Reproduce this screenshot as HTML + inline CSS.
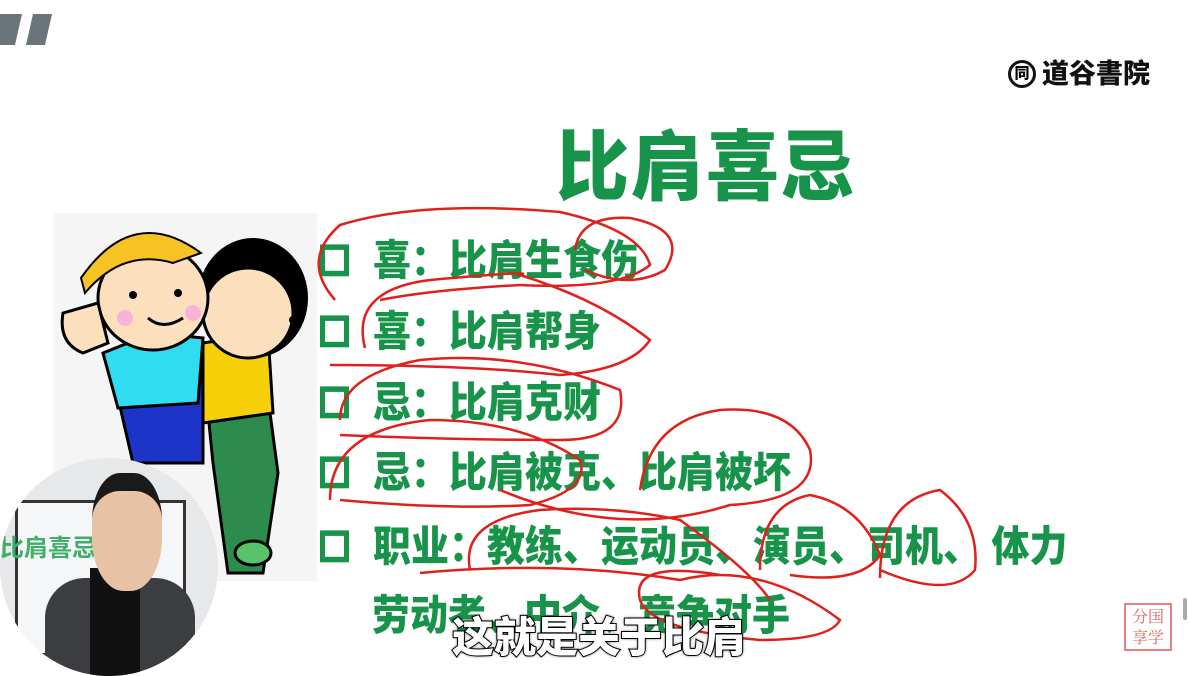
<!DOCTYPE html>
<html><head><meta charset="utf-8"><style>
html,body{margin:0;padding:0}
body{width:1189px;height:669px;position:relative;overflow:hidden;background:#fff;font-family:"Liberation Sans","Noto Sans CJK SC",sans-serif}
.t{position:absolute;color:#17934a;font-weight:900;white-space:nowrap}
.row{position:absolute;left:320px;font-size:38px;font-weight:900;color:#17934a;white-space:nowrap;line-height:40px;transform:scaleY(1.1);transform-origin:left center}
.box{display:inline-block;width:19px;height:19px;border:5px solid #17934a;vertical-align:middle;margin-right:24px;margin-top:-6px}
</style></head><body>
<svg style="position:absolute;left:0;top:0" width="60" height="50"><polygon points="0,14 22,14 15,45 0,45" fill="#6b7479"/><polygon points="33,14 52,14 45,45 26,45" fill="#6b7479"/></svg>
<div style="position:absolute;left:1008px;top:60px;width:28px;height:28px;border:3px solid #111;border-radius:50%;box-sizing:border-box;font-size:15px;font-weight:900;text-align:center;line-height:22px">同</div>
<div class="t" style="left:1042px;top:56px;font-size:27px;color:#111;line-height:36px">道谷書院</div>
<div class="t" style="left:556px;top:126px;font-size:73px;line-height:86px;letter-spacing:2px;transform:scaleY(1.05)">比肩喜忌</div>
<svg style="position:absolute;left:53px;top:213px" width="264" height="368">
<rect width="264" height="368" fill="#f5f5f5"/>
<path d="M150 150 L205 110 L225 260 L210 360 L175 360 L160 250 Z" fill="#2e8b4e" stroke="#000" stroke-width="3"/>
<path d="M150 130 L215 120 L220 200 L150 210 Z" fill="#f6d10a" stroke="#000" stroke-width="3"/>
<ellipse cx="200" cy="85" rx="55" ry="60" fill="#000"/>
<ellipse cx="195" cy="100" rx="45" ry="45" fill="#fce0bd" stroke="#000" stroke-width="3"/>
<path d="M65 185 L150 130 L150 250 L80 250 Z" fill="#1c35c8" stroke="#000" stroke-width="3"/>
<path d="M50 140 L100 120 L150 125 L145 190 L65 195 Z" fill="#2fdcf0" stroke="#000" stroke-width="3"/>
<ellipse cx="100" cy="85" rx="55" ry="52" fill="#fce0bd" stroke="#000" stroke-width="3"/>
<path d="M28 65 Q80 -10 148 40 L120 50 Q70 35 32 80 Z" fill="#f6c323" stroke="#000" stroke-width="2"/>
<path d="M10 100 Q5 130 30 140 L55 130 L45 90 Z" fill="#fce0bd" stroke="#000" stroke-width="3"/>
<circle cx="80" cy="82" r="4"/><circle cx="125" cy="80" r="4"/><circle cx="240" cy="107" r="4"/>
<circle cx="72" cy="105" r="8" fill="#f8b4d8"/><circle cx="140" cy="100" r="8" fill="#f8b4d8"/>
<path d="M95 105 Q110 118 130 105" stroke="#000" stroke-width="3" fill="none"/>
<ellipse cx="200" cy="340" rx="18" ry="12" fill="#58c36b" stroke="#000" stroke-width="3"/>
</svg>
<div style="position:absolute;left:0;top:458px;width:218px;height:218px;border-radius:50%;overflow:hidden;background:#e6e8ea">
<div style="position:absolute;left:15px;top:42px;width:165px;height:150px;background:#f4f6f7;border:3px solid #333"></div>
<div style="position:absolute;left:0;top:70px;font-size:24px;color:#3fae6a;font-weight:700">比肩喜忌</div>
<div style="position:absolute;left:45px;top:120px;width:150px;height:110px;background:#3b3d40;border-radius:40px 40px 0 0"></div>
<div style="position:absolute;left:90px;top:110px;width:50px;height:110px;background:#111"></div>
<div style="position:absolute;left:92px;top:15px;width:70px;height:100px;background:#e8c2a5;border-radius:40% 40% 45% 45%;border-top:18px solid #1a1a1a"></div>
</div>
<div class="row" style="top:242px"><span class="box"></span>喜：比肩生食伤</div>
<div class="row" style="top:313px"><span class="box"></span>喜：比肩帮身</div>
<div class="row" style="top:384px"><span class="box"></span>忌：比肩克财</div>
<div class="row" style="top:454px"><span class="box"></span>忌：比肩被克、比肩被坏</div>
<div class="row" style="top:528px"><span class="box"></span>职业：教练、运动员、演员、司机、 体力</div>
<div class="row" style="top:597px;left:372px">劳动者、中介、竞争对手</div>
<svg style="position:absolute;left:0;top:0" width="1189" height="669" fill="none" stroke="#e0201a" stroke-width="2.5">
<path d="M335 300 Q300 260 340 225 Q420 200 560 212 Q640 230 650 265 Q620 290 520 285 Q430 290 380 300"/>
<path d="M575 250 Q580 215 630 218 Q690 230 665 270 Q630 290 585 270"/>
<path d="M365 348 Q350 290 430 280 Q540 270 520 275 Q600 300 650 340 Q630 370 560 375 Q470 365 330 365"/>
<path d="M340 420 Q340 375 420 360 Q520 350 620 390 Q630 440 560 440 Q460 440 340 435"/>
<path d="M330 500 Q330 430 430 420 Q520 420 580 460 Q590 490 530 505 Q450 510 340 500"/>
<path d="M500 490 Q620 540 730 505 Q820 500 810 450 Q790 405 720 410 Q650 420 640 490"/>
<path d="M470 570 Q460 520 540 510 Q610 505 680 520 Q750 570 770 600"/>
<path d="M420 573 Q560 560 680 580 Q760 560 840 620 Q830 640 760 640 Q650 630 640 600 Q630 560 720 575"/>
<path d="M760 570 Q760 505 810 495 Q860 505 880 555 Q860 585 790 575"/>
<path d="M880 578 Q880 500 940 490 Q980 520 975 570 Q950 600 880 570"/>
</svg>
<div style="position:absolute;left:1124px;top:603px;width:48px;height:48px;border:2px solid #e98080;box-sizing:border-box;color:#e06060;font-size:16px;line-height:21px;text-align:center;font-family:'Noto Serif CJK SC',serif">分国<br>享学</div>
<div style="position:absolute;left:1183px;top:598px;width:4px;height:22px;background:#aaa;border-radius:2px"></div>
<div style="position:absolute;left:452px;top:612px;font-size:42px;font-weight:900;color:#fff;line-height:52px;-webkit-text-stroke:2px #000;paint-order:stroke fill;text-shadow:0 0 3px #000">这就是关于比肩</div>
</body></html>
